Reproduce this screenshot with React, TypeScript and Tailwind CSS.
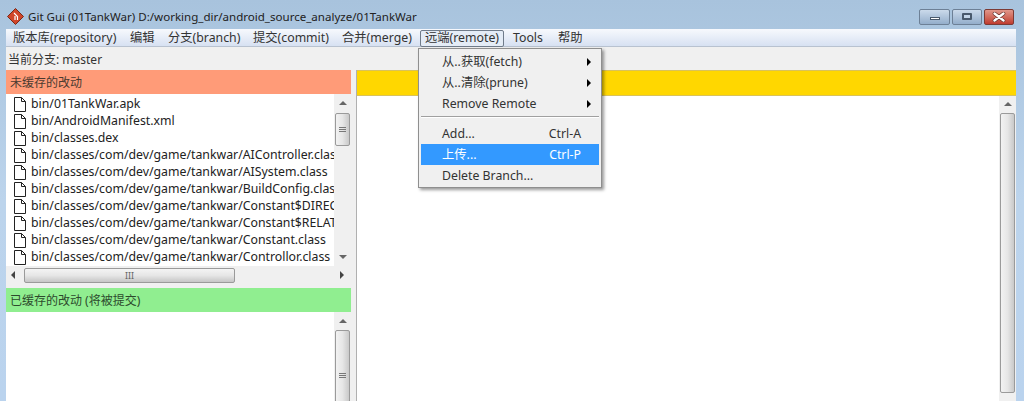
const FONT = "font-['Noto_Sans','Noto_Sans_CJK_SC',sans-serif]";

const files = [
  "bin/01TankWar.apk",
  "bin/AndroidManifest.xml",
  "bin/classes.dex",
  "bin/classes/com/dev/game/tankwar/AIController.class",
  "bin/classes/com/dev/game/tankwar/AISystem.class",
  "bin/classes/com/dev/game/tankwar/BuildConfig.class",
  "bin/classes/com/dev/game/tankwar/Constant$DIRECTION.class",
  "bin/classes/com/dev/game/tankwar/Constant$RELATION.class",
  "bin/classes/com/dev/game/tankwar/Constant.class",
  "bin/classes/com/dev/game/tankwar/Controllor.class",
];

const menus = [
  { label: "版本库(repository)", width: "w-[117px]" },
  { label: "编辑", width: "w-[38px]" },
  { label: "分支(branch)", width: "w-[85px]" },
  { label: "提交(commit)", width: "w-[89px]" },
  { label: "合并(merge)", width: "w-[78px]" },
];

function FileIcon() {
  return (
    <svg width="14" height="17" viewBox="0 0 14 17" className="shrink-0">
      <path d="M1.5 1.5H8.5L12.5 5.5V15.5H1.5Z M8.5 1.5V5.5H12.5" fill="#fff" stroke="#222" strokeWidth="1" />
    </svg>
  );
}

function ArrowUp() {
  return <div className="h-0 w-0 shrink-0 border-x-[4px] border-b-[4px] border-x-transparent border-b-[#666]" />;
}

function ArrowDown() {
  return <div className="h-0 w-0 shrink-0 border-x-[4px] border-t-[4px] border-x-transparent border-t-[#666]" />;
}

function Thumb({ className }: { className: string }) {
  return (
    <div className={`flex flex-col items-center justify-center gap-[1px] rounded-[2px] border border-[#9a9a9a] bg-gradient-to-r from-[#f2f2f2] via-[#e6e6e6] to-[#c9c9c9] ${className}`}>
      <div className="h-px w-[7px] bg-[#777]" />
      <div className="h-px w-[7px] bg-[#777]" />
      <div className="h-px w-[7px] bg-[#777]" />
    </div>
  );
}

function SubMenuItem({ label, shortcut, active, arrow }: { label: string; shortcut?: string; active?: boolean; arrow?: boolean }) {
  return (
    <div className={`flex h-[21px] shrink-0 items-center pl-[21px] pr-[8px] pt-px ${active ? "bg-[#3399ff] text-white" : "text-[#333]"}`}>
      <span className="flex-1">{label}</span>
      {shortcut && <span className="mr-[10px]">{shortcut}</span>}
      {arrow && <div className="h-0 w-0 border-y-[4px] border-l-[4px] border-y-transparent border-l-black" />}
    </div>
  );
}

export default function App() {
  return (
    <div className={`relative flex h-[401px] w-[1024px] flex-col overflow-hidden bg-gradient-to-b from-[#a8c3dd] via-[#bcd4ec] to-[#bad3ee] text-[12.3px] text-[#333] ${FONT}`}>
      {/* title bar */}
      <div className="flex h-[29px] shrink-0 items-center pl-[7px] pr-[10px] pt-[4px]">
        <svg width="17" height="17" viewBox="0 0 17 17" className="shrink-0">
          <path d="M8.5 0.5L16.5 8.5L8.5 16.5L0.5 8.5Z" fill="#d0452a" stroke="#7a2a16" />
          <path d="M7 5L10.5 8.5V12M8 8V12" fill="none" stroke="#fff" strokeWidth="1.2" />
        </svg>
        <span className="ml-[4px] text-[11.55px] text-[#222]">Git Gui (01TankWar) D:/working_dir/android_source_analyze/01TankWar</span>
        <div className="ml-auto flex h-[16px] shrink-0 items-stretch gap-[2px]">
          <div className="flex w-[31px] items-center justify-center rounded-[2px] border border-[#6d8096] bg-gradient-to-b from-[#cbdaeb] to-[#94aecb]">
            <div className="mt-[3px] h-[3px] w-[10px] border border-[#49596c] bg-white" />
          </div>
          <div className="flex w-[30px] items-center justify-center rounded-[2px] border border-[#6d8096] bg-gradient-to-b from-[#cbdaeb] to-[#94aecb]">
            <div className="h-[7px] w-[10px] rounded-[1px] border-2 border-[#49596c] bg-[#c3d4e7]" />
          </div>
          <div className="flex w-[30px] items-center justify-center rounded-[2px] border border-[#7c3a34] bg-gradient-to-b from-[#e0968a] to-[#bf3a2e]">
            <svg width="14" height="10" viewBox="0 0 14 10">
              <path d="M2.5 1.5L11.5 8.5M11.5 1.5L2.5 8.5" stroke="#5b2a24" strokeWidth="3.6" strokeLinecap="round" />
              <path d="M2.5 1.5L11.5 8.5M11.5 1.5L2.5 8.5" stroke="#fff" strokeWidth="2.4" strokeLinecap="round" />
            </svg>
          </div>
        </div>
      </div>

      <div className="ml-[6px] mr-[8px] flex min-h-0 flex-1 flex-col">
        {/* menu bar */}
        <div className="flex h-[18px] shrink-0 items-center border-b border-[#b8c2d0] bg-gradient-to-b from-[#f7f9fd] to-[#d7e1f2] pl-[7px] pt-[2px]">
          {menus.map((menu) => (
            <span key={menu.label} className={`shrink-0 whitespace-nowrap ${menu.width}`}>
              {menu.label}
            </span>
          ))}
          <span className="flex h-[17px] w-[84px] shrink-0 items-center rounded-[2px] border border-[#6f7b8a] bg-[#e4ecf6] pl-[4px]">
            远端(remote)
          </span>
          <span className="ml-[9px] w-[45px] shrink-0">Tools</span>
          <span className="shrink-0">帮助</span>
        </div>

        {/* current branch */}
        <div className="flex h-[23px] shrink-0 items-center bg-[#f0f0f0] pl-[2px] pt-[2px] text-[12px]">当前分支: master</div>

        <div className="flex min-h-0 flex-1 bg-[#f0f0f0]">
          {/* left pane */}
          <div className="flex w-[345px] shrink-0 flex-col">
            <div className="flex h-[24px] shrink-0 items-center bg-[#ff9b78] pl-[4px] pt-px text-[12px] text-[#4a3a30]">未缓存的改动</div>
            <div className="flex h-[172px] shrink-0">
              <div className="w-[328px] overflow-hidden bg-white pl-[7px] pt-[2px]">
                {files.map((file) => (
                  <div key={file} className="flex h-[17px] items-center gap-[4px] whitespace-nowrap text-[#222]">
                    <FileIcon />
                    <span>{file}</span>
                  </div>
                ))}
              </div>
              <div className="flex w-[17px] shrink-0 flex-col items-center pt-[7px]">
                <ArrowUp />
                <Thumb className="mt-[8px] h-[33px] w-[15px]" />
                <div className="flex-1" />
                <div className="mb-[7px]">
                  <ArrowDown />
                </div>
              </div>
            </div>
            <div className="flex h-[18px] shrink-0 items-center">
              <div className="ml-[5px] h-0 w-0 border-y-[4px] border-r-[4px] border-y-transparent border-r-[#444]" />
              <div className="ml-[9px] flex h-[15px] w-[211px] items-center justify-center rounded-[2px] border border-[#9a9a9a] bg-gradient-to-b from-[#f4f4f4] via-[#e6e6e6] to-[#c6c6c6] text-[9px] leading-none text-[#666]">
                III
              </div>
              <div className="ml-auto mr-[7px] h-0 w-0 border-y-[4px] border-l-[4px] border-y-transparent border-l-[#444]" />
            </div>
            <div className="h-[4px] shrink-0" />
            <div className="flex h-[24px] shrink-0 items-center bg-[#90ee90] pl-[4px] pt-px text-[12px] text-[#2d4a2d]">已缓存的改动 (将被提交)</div>
            <div className="flex min-h-0 flex-1">
              <div className="w-[328px] bg-white" />
              <div className="flex w-[17px] shrink-0 flex-col items-center pt-[7px]">
                <ArrowUp />
                <Thumb className="mt-[7px] h-[90px] w-[15px] shrink-0" />
              </div>
            </div>
          </div>

          {/* sash */}
          <div className="w-[5px] shrink-0" />

          {/* right pane */}
          <div className="flex min-w-0 flex-1 flex-col border-l border-[#b0b0b0]">
            <div className="h-[26px] shrink-0 border-y border-[#d9c25a] bg-[#ffd700]" />
            <div className="flex min-h-0 flex-1">
              <div className="flex-1 bg-white" />
              <div className="flex w-[17px] shrink-0 flex-col items-center pt-[6px]">
                <ArrowUp />
                <div className="mt-[7px] h-[280px] w-[15px] shrink-0 rounded-[2px] border border-[#9a9a9a] bg-gradient-to-r from-[#f2f2f2] via-[#e6e6e6] to-[#c9c9c9]" />
              </div>
            </div>
          </div>
        </div>
      </div>

      {/* remote menu dropdown */}
      <div className="absolute left-[418px] top-[48px] flex h-[140px] w-[184px] flex-col border border-[#8f8f8f] bg-[#f0f0f0] px-[2px] pt-[2px] shadow-[2px_2px_3px_rgba(0,0,0,0.4)]">
        <SubMenuItem label="从..获取(fetch)" arrow />
        <SubMenuItem label="从..清除(prune)" arrow />
        <SubMenuItem label="Remove Remote" arrow />
        <div className="mb-[5px] mt-[2px] h-[2px] shrink-0 border-y border-t-[#a0a0a0] border-b-white" />
        <SubMenuItem label="Add..." shortcut="Ctrl-A" />
        <SubMenuItem label="上传..." shortcut="Ctrl-P" active />
        <SubMenuItem label="Delete Branch..." />
      </div>
    </div>
  );
}
